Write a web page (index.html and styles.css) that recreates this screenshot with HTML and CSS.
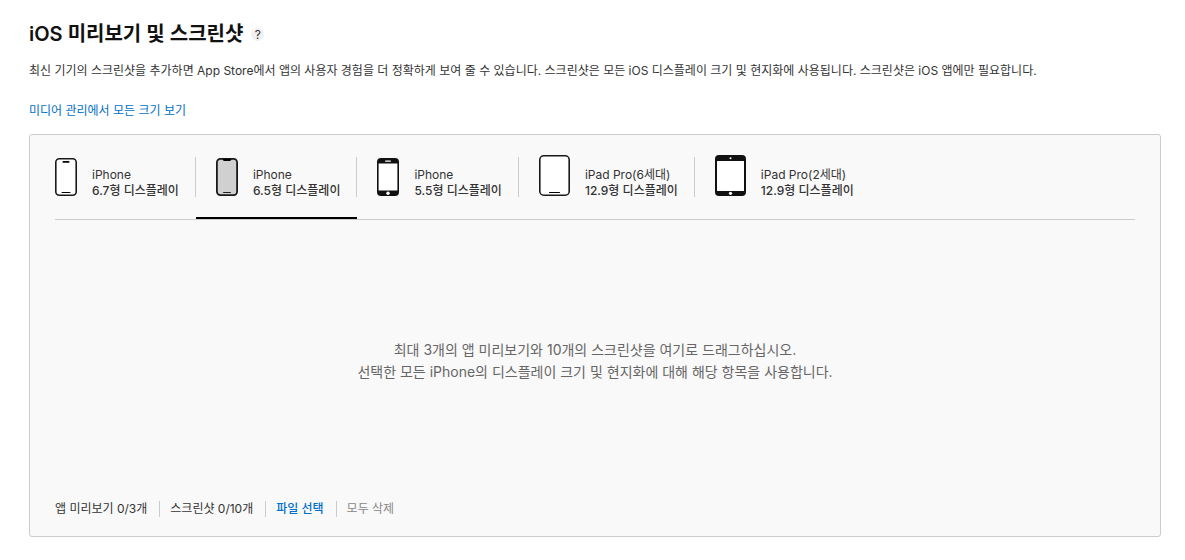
FILE: index.html
```html
<!DOCTYPE html>
<html lang="ko">
<head>
  <meta charset="UTF-8" />
  <meta name="viewport" content="width=device-width, initial-scale=1.0"/>
  <title>iOS 미리보기 및 스크린샷</title>
  <link rel="stylesheet" href="styles.css">
</head>

<body>
  <main class="page">
    <header class="heading">
      <h1>iOS 미리보기 및 스크린샷</h1>
      <button type="button" class="help" aria-label="도움말">?</button>
    </header>
    <p class="intro">최신 기기의 스크린샷을 추가하면 App Store에서 앱의 사용자 경험을 더 정확하게 보여 줄 수 있습니다. 스크린샷은 모든 iOS 디스플레이 크기 및 현지화에 사용됩니다. 스크린샷은 iOS 앱에만 필요합니다.</p>
    <a class="all-sizes" href="#">미디어 관리에서 모든 크기 보기</a>

    <section class="panel">
      <div class="tabs" role="tablist">
        <button type="button" class="tab" role="tab" aria-selected="false">
          <span class="tab-inner">
            <svg width="22" height="38" viewBox="0 0 22 38" aria-hidden="true">
              <rect x="0.8" y="0.8" width="20.4" height="36.4" rx="3.5" fill="#fff" stroke="#1a1a1a" stroke-width="1.6"/>
              <rect x="7.5" y="3" width="7" height="1.8" rx="0.9" fill="#000"/>
              <rect x="6.5" y="34" width="9" height="1" rx="0.5" fill="#000"/>
            </svg>
            <span class="tab-text">iPhone<strong>6.7형 디스플레이</strong></span>
          </span>
        </button>
        <button type="button" class="tab active" role="tab" aria-selected="true">
          <span class="tab-inner">
            <svg width="22" height="38" viewBox="0 0 22 38" aria-hidden="true">
              <rect x="0.9" y="0.9" width="20.2" height="36.2" rx="3.5" fill="#d0d0d0" stroke="#1a1a1a" stroke-width="1.8"/>
              <path d="M6 1h10c-.8.3-1 .6-1.200 1.200-.2.600-.6.900-1.300.900H8.500c-.7 0-1.100-.3-1.300-.9C7 1.600 6.800 1.300 6 1z" fill="#000"/>
              <rect x="7" y="34" width="8" height="1" rx="0.5" fill="#222"/>
            </svg>
            <span class="tab-text">iPhone<strong>6.5형 디스플레이</strong></span>
          </span>
        </button>
        <button type="button" class="tab" role="tab" aria-selected="false">
          <span class="tab-inner">
            <svg width="22" height="38" viewBox="0 0 22 38" aria-hidden="true">
              <rect width="22" height="38" rx="4" fill="#111"/>
              <rect x="1.6" y="5.5" width="18.8" height="27" fill="#fff"/>
              <rect x="8" y="2.5" width="6" height="1.2" rx="0.6" fill="#fff"/>
              <circle cx="11" cy="35.2" r="1.7" fill="#fff"/>
            </svg>
            <span class="tab-text">iPhone<strong>5.5형 디스플레이</strong></span>
          </span>
        </button>
        <button type="button" class="tab" role="tab" aria-selected="false">
          <span class="tab-inner">
            <svg width="31" height="41" viewBox="0 0 31 41" aria-hidden="true">
              <rect x="0.8" y="0.8" width="29.4" height="39.4" rx="4" fill="#fff" stroke="#1a1a1a" stroke-width="1.6"/>
              <rect x="10" y="37" width="11" height="1" rx="0.5" fill="#000"/>
            </svg>
            <span class="tab-text">iPad Pro(6세대)<strong>12.9형 디스플레이</strong></span>
          </span>
        </button>
        <button type="button" class="tab" role="tab" aria-selected="false">
          <span class="tab-inner">
            <svg width="31" height="41" viewBox="0 0 31 41" aria-hidden="true">
              <rect width="31" height="41" rx="4" fill="#111"/>
              <rect x="2" y="6" width="27" height="30" fill="#fff"/>
              <circle cx="15.5" cy="3.2" r="1" fill="#fff"/>
              <circle cx="15.5" cy="38.3" r="1.6" fill="#fff"/>
            </svg>
            <span class="tab-text">iPad Pro(2세대)<strong>12.9형 디스플레이</strong></span>
          </span>
        </button>
      </div>

      <div class="dropzone">
        <p>최대 3개의 앱 미리보기와 10개의 스크린샷을 여기로 드래그하십시오.<br>선택한 모든 iPhone의 디스플레이 크기 및 현지화에 대해 해당 항목을 사용합니다.</p>
      </div>

      <footer class="actions">
        <span>앱 미리보기 0/3개</span>
        <span>스크린샷 0/10개</span>
        <button type="button" class="choose">파일 선택</button>
        <button type="button" class="delete" disabled>모두 삭제</button>
      </footer>
    </section>
  </main>
</body>
</html>
```
FILE: styles.css
```css
* {
  box-sizing: border-box;
}

body {
  margin: 0;
  background: #fff;
  color: #333;
  font-family: Inter, "Noto Sans CJK KR", sans-serif;
  font-size: 12px;
  line-height: 16px;
}

button {
  margin: 0;
  padding: 0;
  border: 0;
  background: none;
  color: inherit;
  font: inherit;
  cursor: pointer;
}

.page {
  padding: 21px 24px 23px 29px;
}

.heading {
  display: flex;
  align-items: center;
  gap: 8px;
}

h1 {
  margin: 0;
  color: #111;
  font-size: 20px;
  font-weight: 600;
  line-height: 26px;
}

.help {
  width: 13px;
  height: 13px;
  border-radius: 50%;
  background: #f0f0f0;
  line-height: 13px;
}

.intro {
  margin: 16px 0 24px;
}

.all-sizes {
  display: block;
  color: #0070c9;
  text-decoration: none;
}

.panel {
  display: flex;
  flex-direction: column;
  margin-top: 15px;
  padding: 22px 25px 19px;
  border: 1px solid #ccc;
  border-radius: 3px;
  background: #f9f9f9;
}

.tabs {
  display: flex;
  border-bottom: 1px solid #ccc;
}

.tab {
  padding-bottom: 20px;
  border-bottom: 2px solid transparent;
  text-align: left;
}

.tab.active {
  border-bottom-color: #000;
}

.tab-inner {
  display: flex;
  align-items: flex-end;
  gap: 15px;
  height: 40px;
  padding: 0 16px 0 20px;
  border-right: 1px solid #ccc;
}

.tab:first-child .tab-inner {
  padding-left: 0;
}

.tab:last-child .tab-inner {
  border-right: 0;
}

.tab svg {
  flex: none;
  margin-bottom: 1px;
}

/* the labels hang slightly below the divider */
.tab-text {
  margin-bottom: -2px;
}

.tab strong {
  display: block;
  font-weight: 500;
}

.dropzone {
  display: flex;
  align-items: center;
  justify-content: center;
  min-height: 281px;
  color: #666;
  font-size: 14px;
  line-height: 22px;
  text-align: center;
}

.dropzone p {
  margin: 0;
}

.actions {
  display: flex;
}

.actions > * + * {
  margin-left: 12px;
  padding-left: 10px;
  border-left: 1px solid #ccc;
}

.choose {
  color: #0070c9;
  font-weight: 500;
}

.delete {
  color: #888;
  cursor: default;
}
```
